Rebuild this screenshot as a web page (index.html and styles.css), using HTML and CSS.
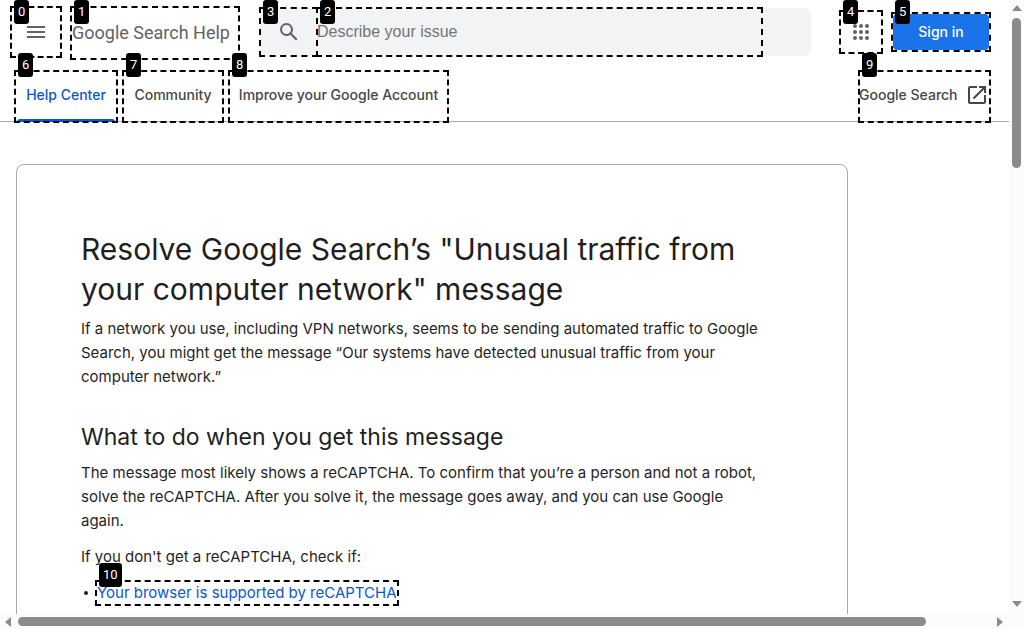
FILE: index.html
```
<!DOCTYPE html>
<html lang="en">
<head>
<meta charset="utf-8">
<title>Google Search Help</title>
<link rel="stylesheet" href="styles.css">
</head>
<body>
<div class="window">
  <div class="page">
    <header class="topbar">
      <button class="icon-button menu marked" aria-label="Main menu"><svg width="18" height="12" viewBox="0 0 18 12"><path d="M0 0h18v2H0zM0 5h18v2H0zM0 10h18v2H0z"/></svg><span class="tag">0</span></button>
      <a class="brand marked" href="#">Google Search Help<span class="tag">1</span></a>
      <form class="search" role="search">
        <button class="search-button marked" type="button" aria-label="Search"><svg width="24" height="24" viewBox="0 0 24 24"><path d="M20.49 19l-5.73-5.73C15.53 12.2 16 10.91 16 9.5A6.5 6.5 0 1 0 9.5 16c1.41 0 2.7-.47 3.77-1.24L19 20.49 20.49 19zM5 9.5C5 7.01 7.01 5 9.5 5S14 7.01 14 9.5 11.99 14 9.5 14 5 11.99 5 9.5z"/></svg><span class="tag">3</span></button>
        <label class="search-field marked"><input type="text" placeholder="Describe your issue" aria-label="Describe your issue"><span class="tag">2</span></label>
      </form>
      <button class="icon-button apps marked" aria-label="Google apps"><svg width="24" height="24" viewBox="0 0 24 24"><g><circle cx="6" cy="6" r="2"/><circle cx="12" cy="6" r="2"/><circle cx="18" cy="6" r="2"/><circle cx="6" cy="12" r="2"/><circle cx="12" cy="12" r="2"/><circle cx="18" cy="12" r="2"/><circle cx="6" cy="18" r="2"/><circle cx="12" cy="18" r="2"/><circle cx="18" cy="18" r="2"/></g></svg><span class="tag">4</span></button>
      <a class="sign-in marked" href="#">Sign in<span class="tag">5</span></a>
    </header>
    <nav class="tabs">
      <a class="tab tab-help active marked" href="#">Help Center<span class="tag">6</span></a>
      <a class="tab tab-community marked" href="#">Community<span class="tag">7</span></a>
      <a class="tab tab-account marked" href="#">Improve your Google Account<span class="tag">8</span></a>
      <a class="product marked" href="#">Google Search<svg width="24" height="24" viewBox="0 0 24 24"><path d="M19 19H5V5h7V3H5a2 2 0 0 0-2 2v14a2 2 0 0 0 2 2h14c1.1 0 2-.9 2-2v-7h-2v7zM14 3v2h3.59l-9.83 9.83 1.41 1.41L19 6.41V10h2V3h-7z"/></svg><span class="tag">9</span></a>
    </nav>
    <main class="card">
      <h1>Resolve Google Search’s "Unusual traffic from your computer network" message</h1>
      <p>If a network you use, including VPN networks, seems to be sending automated traffic to Google Search, you might get the message “Our systems have detected unusual traffic from your computer network.”</p>
      <h2>What to do when you get this message</h2>
      <p>The message most likely shows a reCAPTCHA. To confirm that you’re a person and not a robot, solve the reCAPTCHA. After you solve it, the message goes away, and you can use Google again.</p>
      <p>If you don't get a reCAPTCHA, check if:</p>
      <ul>
        <li><a class="marked" href="#">Your browser is supported by reCAPTCHA<span class="tag">10</span></a></li>
        <li>JavaScript is enabled</li>
      </ul>
    </main>
  </div>
  <div class="scrollbar vertical"><svg class="arrow" viewBox="0 0 10 6"><path d="M0 6 5 0l5 6z"/></svg><div class="track"><div class="thumb"></div></div><svg class="arrow" viewBox="0 0 10 6"><path d="M0 0l5 6 5-6z"/></svg></div>
  <div class="scrollbar horizontal"><svg class="arrow" viewBox="0 0 6 10"><path d="M6 0 0 5l6 5z"/></svg><div class="track"><div class="thumb"></div></div><svg class="arrow" viewBox="0 0 6 10"><path d="M0 0l6 5-6 5z"/></svg></div>
</div>
</body>
</html>
```
FILE: styles.css
```
* { box-sizing: border-box; }
body {
  margin: 0;
  background: #fff;
  color: #1f1f1f;
  font-family: Inter, Roboto, "Liberation Sans", sans-serif;
  font-size: 15px;
  line-height: 24px;
}
a { color: inherit; text-decoration: none; }
button { border: 0; padding: 0; background: none; font: inherit; }
svg { display: block; flex: none; }

.window {
  display: grid;
  grid-template-columns: minmax(0, 1fr) 15px;
  grid-template-rows: minmax(0, 1fr) 15px;
  height: 100vh;
  overflow: hidden;
  background: #fcfcfc;
}
.page { overflow: hidden; background: #fff; }

/* Numbered dashed markers over interactive elements */
.marked { position: relative; }
.marked::after {
  content: "";
  position: absolute;
  inset: -1px;
  border: 2px dashed #000;
  pointer-events: none;
}
.tag {
  position: absolute;
  z-index: 2;
  top: -18px;
  left: 3px;
  padding: 0 4px;
  border-radius: 3px;
  background: #000;
  color: #fff;
  font: 400 13px/24px Roboto, sans-serif;
}

.topbar {
  display: flex;
  align-items: center;
  height: 64px;
  padding: 0 19px 0 11px;
}
.topbar svg { fill: #5f6368; }
.icon-button { display: grid; place-items: center; }
.menu { width: 50px; height: 50px; }
.menu .tag { top: -7px; }
.brand {
  display: flex;
  align-items: center;
  width: 168px;
  height: 52px;
  margin: 2px 0 0 10px;
  padding-left: 1px;
  color: #5f6368;
  font-family: Roboto, sans-serif;
  font-size: 18px;
  white-space: nowrap;
}
.brand .tag { top: -7px; }
.search {
  display: flex;
  flex: 1;
  height: 48px;
  margin: 0 29px 0 21px;
  border-radius: 8px;
  background: #f1f3f4;
}
.search-button { display: grid; place-items: center; width: 57px; }
.search .tag { top: -8px; }
.search-field { flex: 1; margin-right: 49px; }
.search-field input {
  width: 100%;
  height: 48px;
  padding: 0;
  border: 0;
  background: none;
  font: 16px "Liberation Sans", Arial, sans-serif;
}
.search-field input::placeholder { color: #757575; opacity: 1; }
.apps { width: 42px; height: 42px; }
.apps .tag { top: -11px; }
.sign-in {
  width: 98px;
  margin-left: 10px;
  border: 1px solid #fff;
  border-radius: 5px;
  background: #1a73e8;
  color: #fff;
  font-size: 14px;
  font-weight: 500;
  line-height: 36px;
  text-align: center;
}
.sign-in::after { inset: -2px; }
.sign-in .tag { top: -14px; left: 2px; }

.tabs {
  display: flex;
  height: 58px;
  padding: 7px 19px 0 15px;
  gap: 6px;
  border-bottom: 1px solid #aaa;
  color: #444746;
  font-size: 14px;
  font-weight: 500;
  white-space: nowrap;
}
.tab, .product { display: flex; align-items: center; height: 51px; padding-bottom: 3px; }
.tab { justify-content: center; }
.tab-help { width: 102px; }
.tab-community { width: 100px; }
.tab-account { width: 219px; }
.active { color: #0b57d0; }
.active::before {
  content: "";
  position: absolute;
  right: 2px;
  bottom: 0;
  left: 2px;
  height: 3px;
  border-radius: 3px 3px 0 0;
  background: #0b57d0;
}
.product { justify-content: space-between; width: 131px; margin-left: auto; padding-right: 1px; }
.product svg { fill: #444746; }

.card {
  max-width: 832px;
  margin: 42px 16px;
  padding: 64px;
  border: 1px solid #aaa;
  border-radius: 8px;
}
h1 { margin: 0 0 8px; font-size: 30px; font-weight: 400; line-height: 40px; }
h2 { margin: 32px 0 8px; font-size: 23px; font-weight: 400; line-height: 32px; }
p { max-width: 684px; margin: 0 0 12px; }
ul { display: grid; gap: 4px; margin: 0; padding: 0; list-style: none; }
li { padding-left: 15px; position: relative; }
li::before {
  content: "";
  position: absolute;
  top: 10px;
  left: 3px;
  width: 4px;
  height: 4px;
  border-radius: 50%;
  background: #1f1f1f;
}
li a { display: inline-block; padding: 0 1px; color: #0b57d0; }
li a::after { inset: 0 -1px; }

.scrollbar { display: flex; align-items: center; }
.scrollbar .arrow { fill: #8b8b8b; }
.track { display: flex; flex: 1; }
.thumb { border-radius: 5px; background: #8b8b8b; }
.vertical { flex-direction: column; padding: 5px 0 7px; }
.vertical .arrow { width: 10px; height: 6px; }
.vertical .track { flex-direction: column; padding: 7px 0; }
.vertical .thumb { width: 9px; height: 26%; }
.horizontal { padding: 0 6px 0 5px; }
.horizontal .arrow { width: 6px; height: 10px; }
.horizontal .track { padding: 0 7px; }
.horizontal .thumb { width: 93.4%; height: 9px; }
```
